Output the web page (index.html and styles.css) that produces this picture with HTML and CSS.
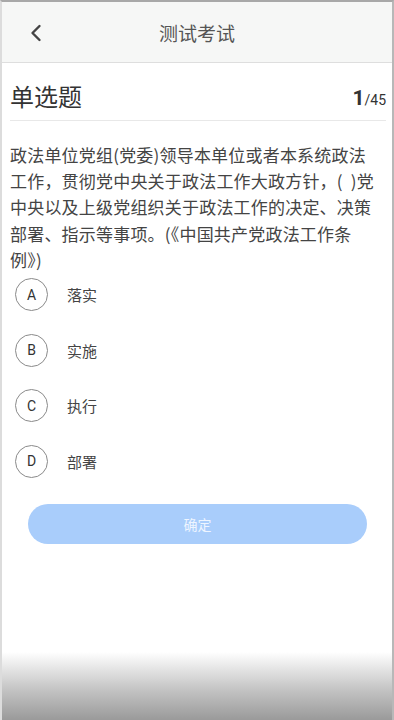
FILE: index.html
```html
<!DOCTYPE html>
<html lang="zh-CN">
<head>
    <meta charset="UTF-8">
    <meta name="viewport" content="width=device-width, initial-scale=1.0">
    <title>测试考试</title>
    <link rel="stylesheet" href="styles.css">
</head>
<body>
    <div class="screen">
        <!-- 顶部导航 -->
        <header class="topbar">
            <span class="back">
                <svg width="14" height="18" viewBox="0 0 14 18"><path d="M10.5 2 L3.5 9 L10.5 16" fill="none" stroke="#444" stroke-width="2.4" stroke-linecap="round" stroke-linejoin="round"/></svg>
            </span>
            <h1 class="title">测试考试</h1>
        </header>

        <main class="content">
            <div class="qhead">
                <span class="qtype">单选题</span>
                <span class="qnum"><b>1</b>/45</span>
            </div>

            <p class="question">政法单位党组(党委)领导本单位或者本系统政法<br>工作，贯彻党中央关于政法工作大政方针，( &nbsp;)党<br>中央以及上级党组织关于政法工作的决定、决策<br>部署、指示等事项。(《中国共产党政法工作条<br>例》)</p>

            <ul class="options">
                <li class="option"><span class="letter">A</span><span class="label">落实</span></li>
                <li class="option"><span class="letter">B</span><span class="label">实施</span></li>
                <li class="option"><span class="letter">C</span><span class="label">执行</span></li>
                <li class="option"><span class="letter">D</span><span class="label">部署</span></li>
            </ul>

            <button class="btn" disabled>确定</button>
        </main>

        <div class="shade"></div>
    </div>
</body>
</html>
```

FILE: styles.css
```css
* {
    box-sizing: border-box;
}
body {
    margin: 0;
    font-family: Roboto, "Noto Sans CJK SC", sans-serif;
    background: #fff;
}
.screen {
    position: relative;
    width: 394px;
    height: 720px;
    overflow: hidden;
    border-top: 2px solid #a8a8a8;
    border-left: 2px solid #dcdcdc;
    border-right: 2px solid #b8b8b8;
    display: flex;
    flex-direction: column;
}
.topbar {
    height: 61px;
    background: #f6f7f6;
    border-bottom: 1px solid #dedede;
    display: flex;
    align-items: center;
    justify-content: center;
    position: relative;
}
.back {
    position: absolute;
    left: 27px;
    top: 22px;
}
.title {
    margin: 0;
    font-size: 19px;
    font-weight: normal;
    color: #555;
    font-family: "Noto Sans CJK SC", sans-serif;
}
.content {
    padding: 0 6px 0 8px;
    flex: 1;
}
.qhead {
    display: flex;
    justify-content: space-between;
    align-items: center;
    height: 58px;
    padding-top: 8px;
    border-bottom: 1px solid #e8e8e8;
}
.qtype {
    font-family: "Noto Sans CJK SC", sans-serif;
    font-size: 24px;
    color: #333;
}
.qnum {
    font-size: 14px;
    color: #333;
    padding-top: 4px;
}
.qnum b {
    font-size: 21px;
}
.question {
    margin: 21px 0 0;
    font-family: "Noto Sans CJK SC", sans-serif;
    font-size: 17px;
    line-height: 26.2px;
    letter-spacing: 0.2px;
    color: #444;
    white-space: nowrap;
}
.options {
    list-style: none;
    margin: -6px 0 0;
    padding: 0;
}
.option {
    display: flex;
    align-items: center;
    height: 55.5px;
}
.letter {
    width: 33px;
    height: 33px;
    border: 1px solid #8a8a8a;
    border-radius: 50%;
    display: flex;
    align-items: center;
    justify-content: center;
    font-size: 14px;
    color: #333;
    margin-left: 5px;
}
.label {
    margin-left: 19px;
    font-family: "Noto Sans CJK SC", sans-serif;
    font-size: 15px;
    color: #444;
}
.btn {
    display: block;
    width: 339px;
    height: 40px;
    margin: 15px 0 0 18px;
    border: none;
    border-radius: 20px;
    background: #a9cdfb;
    color: #eef5ff;
    font-family: "Noto Sans CJK SC", sans-serif;
    font-size: 14px;
}
.shade {
    position: absolute;
    left: 0;
    right: 0;
    bottom: 0;
    height: 68px;
    background: linear-gradient(#fff, #c4c4c4 55%, #9a9a9a);
}
```
